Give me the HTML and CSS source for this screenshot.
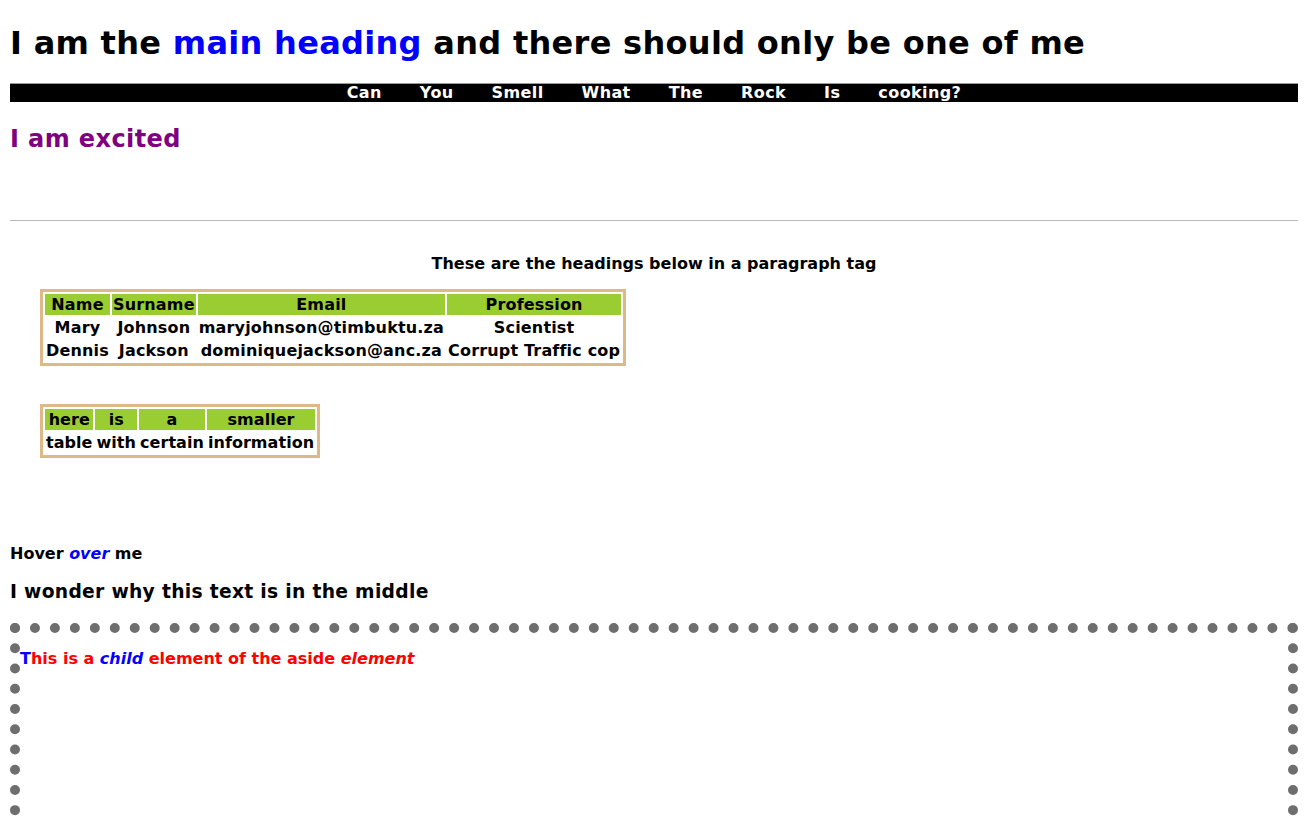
FILE: index.html
```html
<!DOCTYPE html>
<html>
<head>
<meta charset="utf-8">
<link rel="stylesheet" href="styles.css">
</head>
<body>
<h1 class="main-title">I am the <span class="blue">main heading</span> and there should only be one of me</h1>
<nav class="topnav">
  <ul class="nav-list">
    <li>Can</li><li>You</li><li>Smell</li><li>What</li><li>The</li><li>Rock</li><li>Is</li><li>cooking?</li>
  </ul>
</nav>
<h2 class="excited">I am excited</h2>
<hr class="rule">
<p class="centered">These are the headings below in a paragraph tag</p>
<table class="data-table big-table">
  <tr><th>Name</th><th>Surname</th><th>Email</th><th>Profession</th></tr>
  <tr><td>Mary</td><td>Johnson</td><td>maryjohnson@timbuktu.za</td><td>Scientist</td></tr>
  <tr><td>Dennis</td><td>Jackson</td><td>dominiquejackson@anc.za</td><td>Corrupt Traffic cop</td></tr>
</table>
<table class="data-table small-table">
  <tr><th>here</th><th>is</th><th>a</th><th>smaller</th></tr>
  <tr><td>table</td><td>with</td><td>certain</td><td>information</td></tr>
</table>
<p class="hover">Hover <em class="blue">over</em> me</p>
<h3 class="wonder">I wonder why this text is in the middle</h3>
<aside class="aside">
  <p class="child">This is a <em class="blue">child</em> element of the aside <em>element</em></p>
</aside>
</body>
</html>
```
FILE: styles.css
```css
html, body {
  font-family: "DejaVu Sans", sans-serif;
  font-weight: bold;
  color: #000;
}
body {
  margin: 10px;
}
.blue { color: #0000ff; }
.main-title {
  font-size: 32px;
  letter-spacing: 0.3px;
  margin: 14px 0 21px;
}
.topnav {
  background: #000;
  border-top: 1px solid #9a9a9a;
}
.nav-list {
  list-style: none;
  margin: 0;
  padding: 0;
  display: flex;
  justify-content: center;
}
.nav-list li {
  color: #fff;
  font-size: 16px;
  letter-spacing: 0.4px;
  padding: 0 19px;
  line-height: 18px;
}
.excited {
  color: #800080;
  font-size: 24px;
  letter-spacing: 0.4px;
  margin: 23px 0 0;
}
.rule {
  margin: 67px 0 0;
  border: none;
  border-top: 1px solid #b8b8b8;
}
.centered {
  text-align: center;
  font-size: 16px;
  margin: 33px 0 16px;
}
.data-table {
  margin-left: 30px;
  border: 3px solid #deb887;
  border-spacing: 2px;
  font-size: 16px;
}
.big-table {
  letter-spacing: 0.17px;
}
.data-table th {
  background: #9acd32;
  padding: 1px;
}
.data-table td {
  text-align: center;
  padding: 1px;
}
.small-table {
  margin-top: 38px;
  letter-spacing: 0.05px;
}
.hover {
  font-size: 16px;
  margin: 86px 0 0;
}
.wonder {
  font-size: 18.72px;
  letter-spacing: 0.3px;
  margin: 18px 0 21px;
}
.aside {
  border: 10px dotted #6e6e6e;
  height: 395px;
}
.child {
  color: #ff0000;
  font-size: 16px;
  margin: 16px 0;
}
.child::first-letter {
  color: #0000ff;
}
```
